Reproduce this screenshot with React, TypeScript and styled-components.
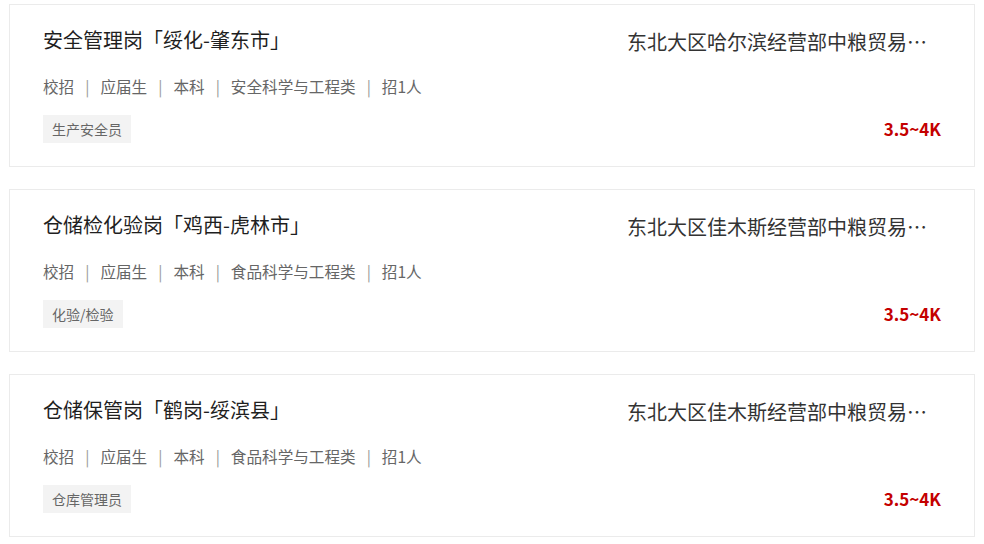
import React from 'react';
import styled, { createGlobalStyle } from 'styled-components';

const GlobalStyle = createGlobalStyle`
  body {
    margin: 0;
    background: #fff;
    font-family: "Noto Sans CJK SC", "Noto Sans", sans-serif;
  }
`;

const List = styled.div`
  display: flex;
  flex-direction: column;
  gap: 22px;
  padding: 4px 9px 0 9px;
`;

const Card = styled.div`
  display: flex;
  padding: 21px 33px 23px 33px;
  border: 1px solid #ebebeb;
  background: #fff;
`;

const Main = styled.div`
  display: flex;
  flex-direction: column;
  align-items: flex-start;
  flex: 1;
  min-width: 0;
`;

const Title = styled.div`
  font-size: 20px;
  line-height: 28px;
  color: #1f1f1f;
`;

const Meta = styled.div`
  display: flex;
  align-items: center;
  margin-top: 21px;
  font-size: 15.6px;
  line-height: 22px;
  color: #666;
`;

const Sep = styled.span`
  margin: 0 11px;
  color: #999;
`;

const Tag = styled.span`
  margin-top: 18px;
  height: 28px;
  padding: 0 9px;
  font-size: 14px;
  line-height: 28px;
  color: #666;
  background: #f3f3f3;
`;

const Side = styled.div`
  display: flex;
  flex-direction: column;
  justify-content: space-between;
  width: 314px;
`;

const Company = styled.div`
  margin-top: 2px;
  font-size: 20px;
  line-height: 28px;
  color: #333;
  white-space: nowrap;
  overflow: hidden;
  text-overflow: ellipsis;
`;

const Salary = styled.div`
  align-self: flex-end;
  font-size: 17px;
  line-height: 28px;
  font-weight: bold;
  color: #c40000;
`;

interface Job {
  title: string;
  meta: string[];
  tag: string;
  company: string;
  salary: string;
}

const jobs: Job[] = [
  {
    title: '安全管理岗「绥化-肇东市」',
    meta: ['校招', '应届生', '本科', '安全科学与工程类', '招1人'],
    tag: '生产安全员',
    company: '东北大区哈尔滨经营部中粮贸易有限公司',
    salary: '3.5~4K',
  },
  {
    title: '仓储检化验岗「鸡西-虎林市」',
    meta: ['校招', '应届生', '本科', '食品科学与工程类', '招1人'],
    tag: '化验/检验',
    company: '东北大区佳木斯经营部中粮贸易有限公司',
    salary: '3.5~4K',
  },
  {
    title: '仓储保管岗「鹤岗-绥滨县」',
    meta: ['校招', '应届生', '本科', '食品科学与工程类', '招1人'],
    tag: '仓库管理员',
    company: '东北大区佳木斯经营部中粮贸易有限公司',
    salary: '3.5~4K',
  },
];

const JobCard = ({ job }: { job: Job }) => (
  <Card>
    <Main>
      <Title>{job.title}</Title>
      <Meta>
        {job.meta.map((item, index) => (
          <React.Fragment key={index}>
            {index > 0 && <Sep>|</Sep>}
            <span>{item}</span>
          </React.Fragment>
        ))}
      </Meta>
      <Tag>{job.tag}</Tag>
    </Main>
    <Side>
      <Company>{job.company}</Company>
      <Salary>{job.salary}</Salary>
    </Side>
  </Card>
);

const App = () => (
  <>
    <GlobalStyle />
    <List>
      {jobs.map((job, index) => <JobCard key={index} job={job} />)}
    </List>
  </>
);

export default App;
